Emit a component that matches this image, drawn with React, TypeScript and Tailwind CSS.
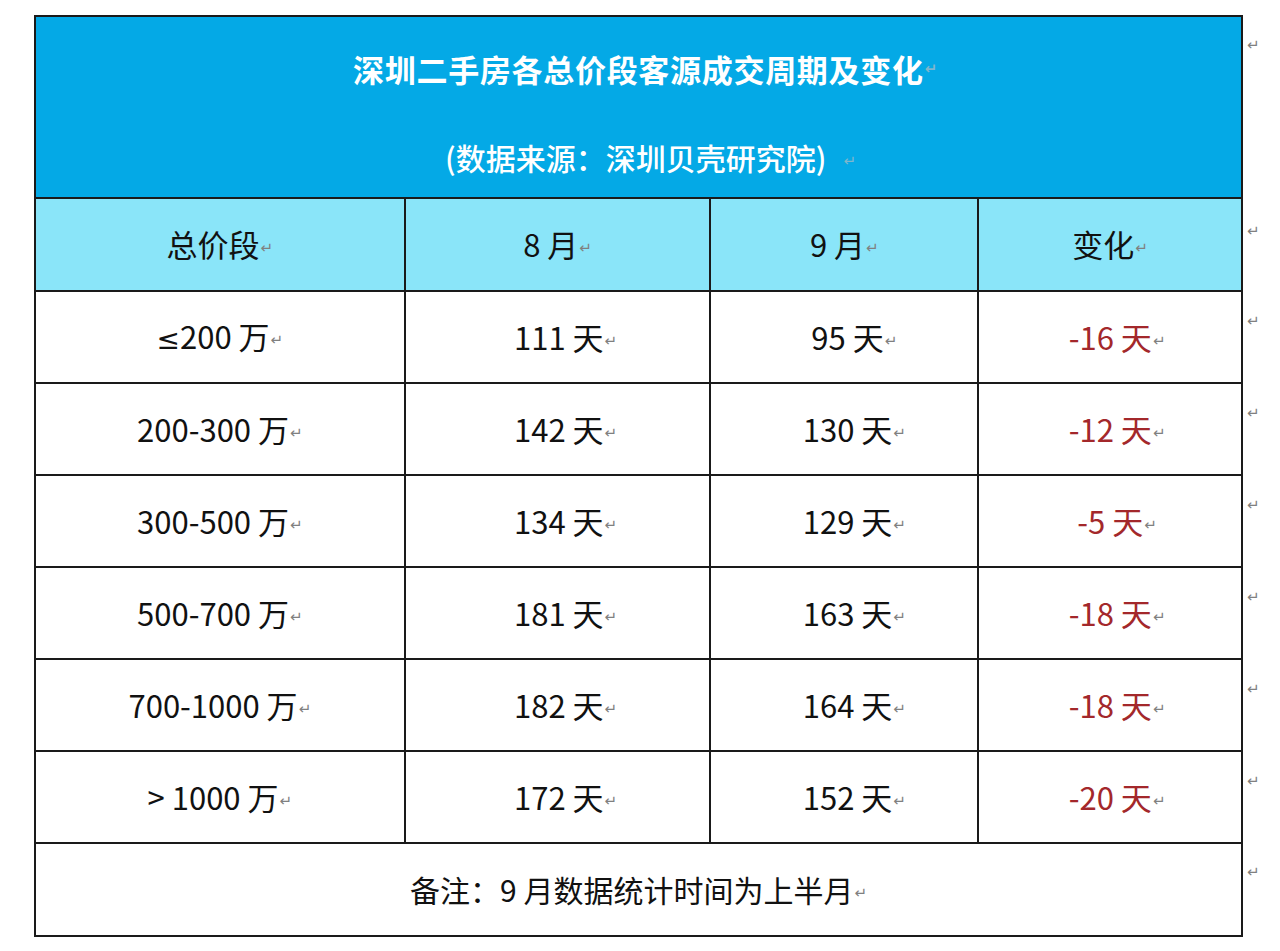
import React from 'react';

const rows = [
  { range: '200 万', le: true, aug: '111 天', sep: '95 天', diff: '-16 天' },
  { range: '200-300 万', aug: '142 天', sep: '130 天', diff: '-12 天' },
  { range: '300-500 万', aug: '134 天', sep: '129 天', diff: '-5 天' },
  { range: '500-700 万', aug: '181 天', sep: '163 天', diff: '-18 天' },
  { range: '700-1000 万', aug: '182 天', sep: '164 天', diff: '-18 天' },
  { range: '> 1000 万', aug: '172 天', sep: '152 天', diff: '-20 天' },
];

// Word paragraph mark after each cell
const Mark = ({ light }: { light?: boolean }) => (
  <span
    className={`ml-[1px] align-middle text-[15px] leading-none ${light ? 'text-[#7fb6cc]' : 'text-[#808080]'}`}
    style={{ fontFamily: '"DejaVu Sans", sans-serif' }}
  >
    ↵
  </span>
);

const RowMark = ({ top = 'pt-[21px]' }: { top?: string }) => (
  <td className="w-[38px] border-0 bg-white p-0 pl-[3px] align-top">
    <div className={`${top} text-[15px] leading-none`}>
      <Mark />
    </div>
  </td>
);

const cell = 'border-2 border-[#1a1a1a] p-0 text-center align-middle';

export default function App() {
  return (
    <div
      className="min-h-[951px] w-[1280px] bg-white pl-[34px] pt-[15px]"
      style={{ fontFamily: '"Noto Sans CJK SC", "Noto Sans", sans-serif' }}
    >
      <table className="border-collapse text-[31px] text-[#111]">
        <tbody>
          <tr className="h-[182px]">
            <td colSpan={4} className={`${cell} bg-[#04a9e6] align-top`}>
              <div className="flex flex-col items-center text-white">
                <div className="mt-[30px] flex h-[44px] items-center pl-[14px] text-[31px] font-bold tracking-[0.7px]">
                  深圳二手房各总价段客源成交周期及变化
                  <Mark light />
                </div>
                <div className="mt-[44px] flex h-[44px] items-center pl-[24px] text-[30px] font-medium">
                  (数据来源：深圳贝壳研究院)
                  <span className="ml-[16px]">
                    <Mark light />
                  </span>
                </div>
              </div>
            </td>
            <RowMark top="pt-[20px]" />
          </tr>
          <tr className="h-[93px] bg-[#8ae5f9]">
            <td className={`${cell} w-[370px]`}>
              总价段
              <Mark />
            </td>
            <td className={`${cell} w-[306px]`}>
              8 月<Mark />
            </td>
            <td className={`${cell} w-[268px]`}>
              9 月<Mark />
            </td>
            <td className={`${cell} w-[264px]`}>
              变化
              <Mark />
            </td>
            <RowMark top="pt-[24px]" />
          </tr>
          {rows.map((r) => (
            <tr key={r.range} className="h-[92px]">
              <td className={cell}>
                {r.le && <span style={{ fontFamily: '"DejaVu Sans", sans-serif' }} className="text-[28px]">≤</span>}
                {r.range}
                <Mark />
              </td>
              <td className={`${cell} pl-[16px]`}>
                {r.aug}
                <Mark />
              </td>
              <td className={`${cell} pl-[20px]`}>
                {r.sep}
                <Mark />
              </td>
              <td className={`${cell} pl-[14px] text-[#a3282b]`}>
                {r.diff}
                <Mark />
              </td>
              <RowMark />
            </tr>
          ))}
          <tr className="h-[93px]">
            <td colSpan={4} className={`${cell} text-[30px]`}>
              备注：9 月数据统计时间为上半月
              <Mark />
            </td>
            <RowMark top="pt-[20px]" />
          </tr>
        </tbody>
      </table>
    </div>
  );
}
